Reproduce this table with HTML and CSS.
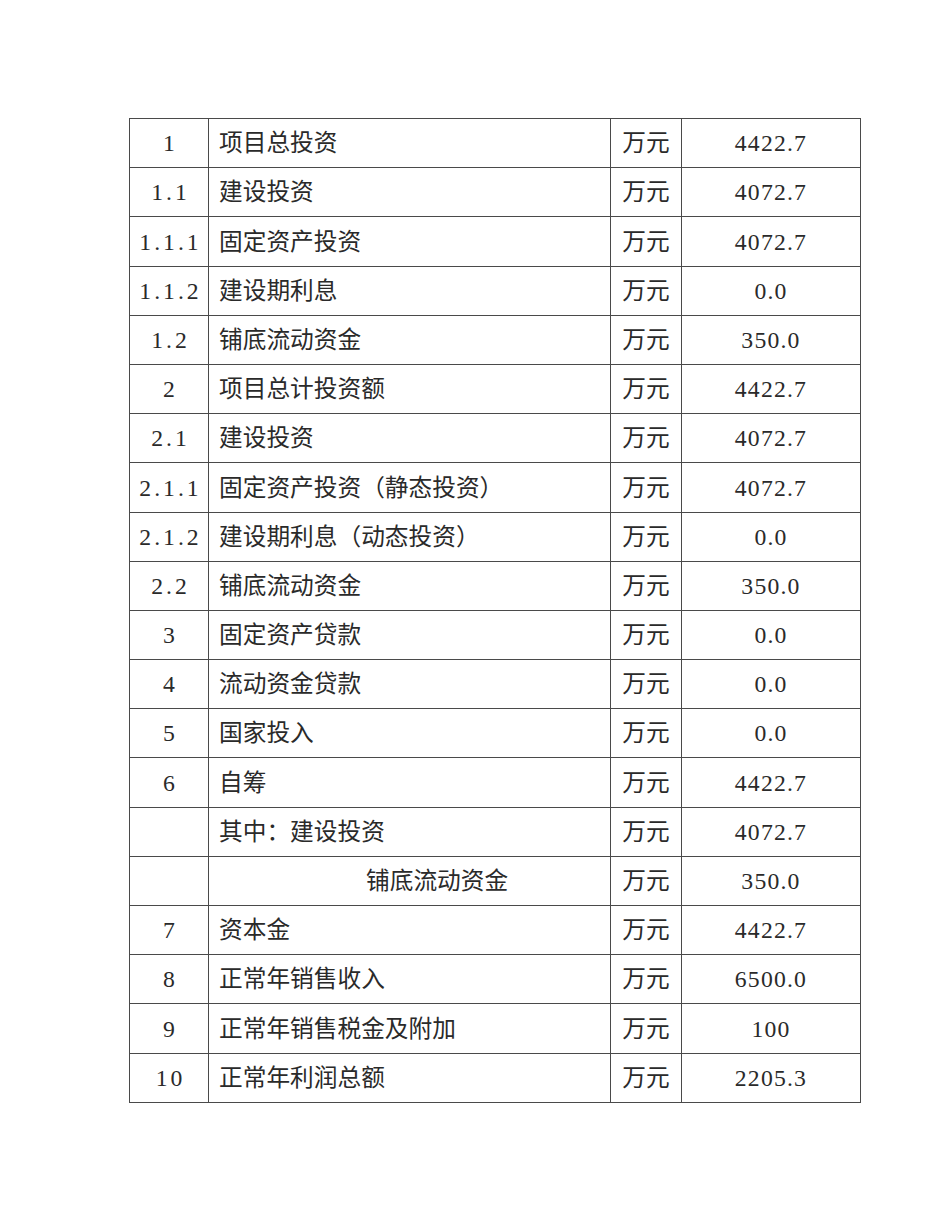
FILE: index.html
```html
<!DOCTYPE html>
<html lang="zh">
<head>
<meta charset="utf-8">
<link rel="stylesheet" href="styles.css">
</head>
<body>
<table class="tbl">
<colgroup><col class="c1"><col class="c2"><col class="c3"><col class="c4"></colgroup>
<tbody>
<tr><td class="num">1</td><td class="name">项目总投资</td><td class="unit">万元</td><td class="val">4422.7</td></tr>
<tr><td class="num">1.1</td><td class="name">建设投资</td><td class="unit">万元</td><td class="val">4072.7</td></tr>
<tr><td class="num">1.1.1</td><td class="name">固定资产投资</td><td class="unit">万元</td><td class="val">4072.7</td></tr>
<tr><td class="num">1.1.2</td><td class="name">建设期利息</td><td class="unit">万元</td><td class="val">0.0</td></tr>
<tr><td class="num">1.2</td><td class="name">铺底流动资金</td><td class="unit">万元</td><td class="val">350.0</td></tr>
<tr><td class="num">2</td><td class="name">项目总计投资额</td><td class="unit">万元</td><td class="val">4422.7</td></tr>
<tr><td class="num">2.1</td><td class="name">建设投资</td><td class="unit">万元</td><td class="val">4072.7</td></tr>
<tr><td class="num">2.1.1</td><td class="name">固定资产投资（静态投资）</td><td class="unit">万元</td><td class="val">4072.7</td></tr>
<tr><td class="num">2.1.2</td><td class="name">建设期利息（动态投资）</td><td class="unit">万元</td><td class="val">0.0</td></tr>
<tr><td class="num">2.2</td><td class="name">铺底流动资金</td><td class="unit">万元</td><td class="val">350.0</td></tr>
<tr><td class="num">3</td><td class="name">固定资产贷款</td><td class="unit">万元</td><td class="val">0.0</td></tr>
<tr><td class="num">4</td><td class="name">流动资金贷款</td><td class="unit">万元</td><td class="val">0.0</td></tr>
<tr><td class="num">5</td><td class="name">国家投入</td><td class="unit">万元</td><td class="val">0.0</td></tr>
<tr><td class="num">6</td><td class="name">自筹</td><td class="unit">万元</td><td class="val">4422.7</td></tr>
<tr><td class="num"></td><td class="name">其中：建设投资</td><td class="unit">万元</td><td class="val">4072.7</td></tr>
<tr><td class="num"></td><td class="name indent">铺底流动资金</td><td class="unit">万元</td><td class="val">350.0</td></tr>
<tr><td class="num">7</td><td class="name">资本金</td><td class="unit">万元</td><td class="val">4422.7</td></tr>
<tr><td class="num">8</td><td class="name">正常年销售收入</td><td class="unit">万元</td><td class="val">6500.0</td></tr>
<tr><td class="num">9</td><td class="name">正常年销售税金及附加</td><td class="unit">万元</td><td class="val">100</td></tr>
<tr><td class="num">10</td><td class="name">正常年利润总额</td><td class="unit">万元</td><td class="val">2205.3</td></tr>
</tbody>
</table>
</body>
</html>
```
FILE: styles.css
```css
html, body {
  margin: 0;
  padding: 0;
  background: #ffffff;
}
body {
  padding-top: 118px;
  padding-left: 129px;
  font-family: "Liberation Serif", "Noto Sans CJK SC", serif;
  color: #2a2a2a;
}
.tbl {
  border-collapse: collapse;
  table-layout: fixed;
  width: 731px;
}
.c1 { width: 79px; }
.c2 { width: 402px; }
.c3 { width: 71px; }
.c4 { width: 179px; }
.tbl td {
  border: 1px solid #4a4a4a;
  height: 46.2px;
  padding: 2px 0 0 0;
  font-size: 23.7px;
  line-height: 1;
  vertical-align: middle;
  white-space: nowrap;
}
.num {
  text-align: center;
  letter-spacing: 3px;
  text-indent: 3px;
}
.name {
  padding-left: 10px !important;
  text-align: left;
}
.indent {
  padding-left: 157px !important;
}
.unit {
  text-align: center;
}
.val {
  text-align: center;
  letter-spacing: 1.2px;
}
```
